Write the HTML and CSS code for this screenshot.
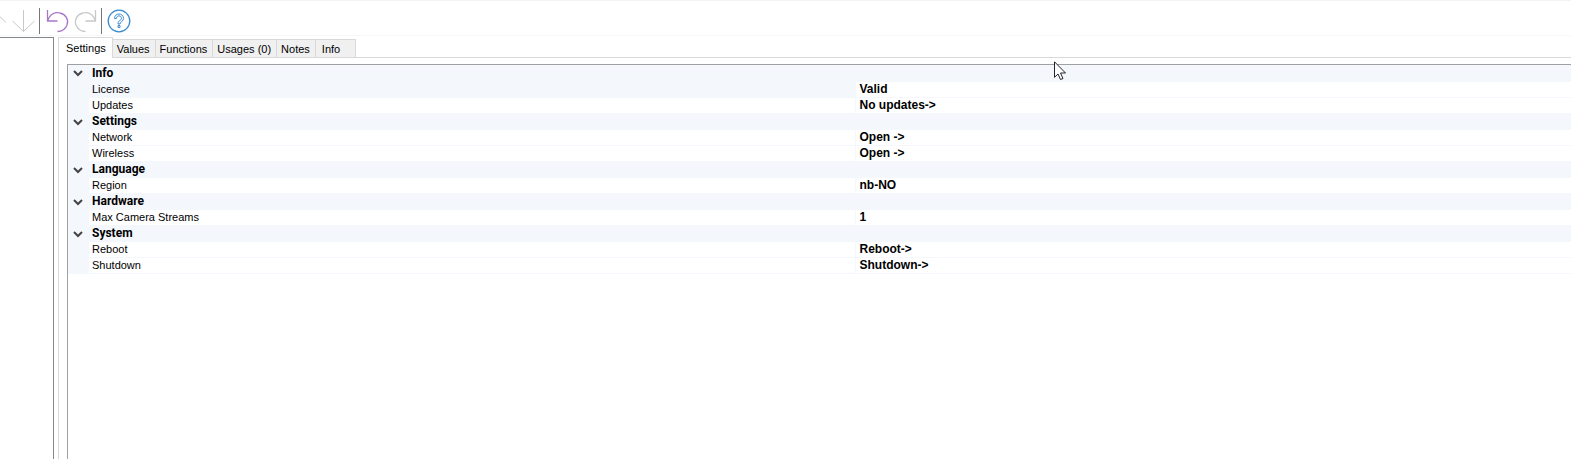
FILE: index.html
```
<!DOCTYPE html>
<html lang="en">
<head>
    <meta charset="UTF-8">
    <meta name="viewport" content="width=device-width, initial-scale=1.0">
    <title>Settings</title>
    <link rel="stylesheet" href="styles.css">
</head>
<body>
    <!-- Toolbar -->
    <div class="toolbar">
        <button type="button" class="tool tool-up" aria-label="Move up">
            <svg width="12" height="24" viewBox="0 0 12 24" fill="none" stroke="#c8c8c8"><path d="M-5 3v20M-16 13.500L-5 3L6 13.500"/></svg>
        </button>
        <button type="button" class="tool tool-down" aria-label="Move down">
            <svg width="24" height="24" viewBox="0 0 24 24" fill="none" stroke="#c8c8c8"><path d="M11.500 1v21M.5 12l11 10.500 11-10.500"/></svg>
        </button>
        <span class="separator"></span>
        <button type="button" class="tool" aria-label="Undo">
            <svg width="24" height="24" viewBox="0 0 24 24" fill="none" stroke="#a678c8" stroke-width="1.300"><path d="M1.500 1v11h10M1.500 12C4 5 9 2.500 14 4c6 1.500 9 7 7 12-1.500 4-5 6.500-9.500 6.500"/></svg>
        </button>
        <button type="button" class="tool tool-redo" aria-label="Redo">
            <svg width="24" height="24" viewBox="0 0 24 24" fill="none" stroke="#c8c8c8" stroke-width="1.300"><path d="M21.500 1v11h-10M21.500 12C19 5 14 2.500 9 4c-6 1.500-9 7-7 12 1.500 4 5 6.500 9.500 6.500"/></svg>
        </button>
        <span class="separator"></span>
        <button type="button" class="tool tool-help" aria-label="Help">
            <svg width="24" height="24" viewBox="0 0 24 24" fill="none" stroke="#3c8ccf" stroke-width="1.300"><circle cx="12" cy="12" r="10.800"/><path d="M7.500 9.500c0-6 9-6 9 0 0 3-3.500 3-3.500 5.500h-2c0-4 3.500-3.500 3.500-5.500 0-3.500-5-3.500-5 0z" stroke-width="1"/><path d="M11 16.500h2v2h-2z" stroke-width="1"/></svg>
        </button>
    </div>

    <div class="workspace">
        <div class="side-panel"></div>

        <div class="main-panel">
            <div class="tabs" role="tablist">
                <button type="button" class="tab active" role="tab" aria-selected="true">Settings</button>
                <button type="button" class="tab" role="tab">Values</button>
                <button type="button" class="tab" role="tab">Functions</button>
                <button type="button" class="tab" role="tab">Usages (0)</button>
                <button type="button" class="tab" role="tab">Notes</button>
                <button type="button" class="tab tab-last" role="tab">Info</button>
            </div>

            <div class="tab-content">
                <table class="property-grid">
                    <colgroup>
                        <col class="col-gutter">
                        <col class="col-name">
                        <col class="col-value">
                    </colgroup>
                    <tbody>
                        <tr class="category">
                            <td><button type="button" class="toggle" aria-label="Collapse Info"><svg width="10" height="8" viewBox="0 0 10 8"><path d="M1 2l4 4 4-4"/></svg></button></td>
                            <th colspan="2">Info</th>
                        </tr>
                        <tr class="selected"><td></td><td>License</td><td>Valid</td></tr>
                        <tr><td></td><td>Updates</td><td>No updates-&gt;</td></tr>
                    </tbody>
                    <tbody>
                        <tr class="category">
                            <td><button type="button" class="toggle" aria-label="Collapse Settings"><svg width="10" height="8" viewBox="0 0 10 8"><path d="M1 2l4 4 4-4"/></svg></button></td>
                            <th colspan="2">Settings</th>
                        </tr>
                        <tr><td></td><td>Network</td><td>Open -&gt;</td></tr>
                        <tr><td></td><td>Wireless</td><td>Open -&gt;</td></tr>
                    </tbody>
                    <tbody>
                        <tr class="category">
                            <td><button type="button" class="toggle" aria-label="Collapse Language"><svg width="10" height="8" viewBox="0 0 10 8"><path d="M1 2l4 4 4-4"/></svg></button></td>
                            <th colspan="2">Language</th>
                        </tr>
                        <tr><td></td><td>Region</td><td>nb-NO</td></tr>
                    </tbody>
                    <tbody>
                        <tr class="category">
                            <td><button type="button" class="toggle" aria-label="Collapse Hardware"><svg width="10" height="8" viewBox="0 0 10 8"><path d="M1 2l4 4 4-4"/></svg></button></td>
                            <th colspan="2">Hardware</th>
                        </tr>
                        <tr><td></td><td>Max Camera Streams</td><td>1</td></tr>
                    </tbody>
                    <tbody>
                        <tr class="category">
                            <td><button type="button" class="toggle" aria-label="Collapse System"><svg width="10" height="8" viewBox="0 0 10 8"><path d="M1 2l4 4 4-4"/></svg></button></td>
                            <th colspan="2">System</th>
                        </tr>
                        <tr><td></td><td>Reboot</td><td>Reboot-&gt;</td></tr>
                        <tr><td></td><td>Shutdown</td><td>Shutdown-&gt;</td></tr>
                    </tbody>
                </table>
            </div>
        </div>
    </div>

    <!-- Mouse pointer -->
    <svg class="pointer" width="12" height="20" viewBox="0 0 12 20" fill="#fff" stroke="#222233"><path d="M.5 .8v15.500l3.500-3.300 2.500 5.500 2.500-1-2.500-5.500h5z"/></svg>
</body>
</html>
```

FILE: styles.css
```
* {
    box-sizing: border-box;
}

body {
    margin: 0;
    min-height: 100vh;
    display: flex;
    flex-direction: column;
    overflow: hidden;
    background-color: #fff;
    color: #000;
    font-family: "Liberation Sans", Arial, sans-serif;
    font-size: 11px;
    line-height: 15px;
}

button {
    padding: 0;
    border: none;
    background: none;
    color: inherit;
    font: inherit;
}

svg {
    display: block;
}

.toolbar {
    display: flex;
    align-items: center;
    height: 36px;
    padding-top: 6px;
    border-top: 1px solid #f3f3f3;
    border-bottom: 1px solid #f7f7f7;
}

.tool-down {
    margin-right: 3px;
}

.tool-redo {
    margin: 0 3px 0 4px;
}

.tool-help {
    margin-left: 5px;
}

.separator {
    width: 1px;
    height: 26px;
    margin-right: 6px;
    background-color: #777;
}

.tool-redo + .separator {
    margin-right: 0;
}

.workspace {
    flex: 1;
    display: flex;
    padding-top: 1px;
}

.side-panel {
    width: 54px;
    border-top: 1px solid #828790;
    border-right: 1px solid #828790;
}

.main-panel {
    flex: 1;
    display: flex;
    flex-direction: column;
    margin-left: 4px;
}

.tabs {
    display: flex;
    align-items: flex-end;
    height: 21px;
    border-bottom: 1px solid #d9d9d9;
}

.tab {
    height: 18px;
    padding: 2px 5px 0 4px;
    border: 1px solid #d9d9d9;
    border-bottom: none;
    border-left: none;
    background-color: #f0f0f0;
}

.tab.active {
    height: 21px;
    padding: 0 6px 0 7px;
    margin-bottom: -1px;
    border-left: 1px solid #d9d9d9;
    background-color: #fff;
}

.tab-last {
    padding: 2px 15px 0 6px;
}

.tab-content {
    flex: 1;
    display: flex;
    flex-direction: column;
    padding: 6px 0 0 8px;
    border-left: 1px solid #d9d9d9;
}

.tab-content::after {
    content: "";
    flex: 1;
    border-left: 1px solid #a0a0a0;
}

.property-grid {
    width: 100%;
    table-layout: fixed;
    border-collapse: separate;
    border-spacing: 0;
    border-top: 1px solid #a0a0a0;
    border-left: 1px solid #a0a0a0;
}

.col-gutter {
    width: 21px;
}

.col-name {
    width: 51%;
}

.property-grid td,
.property-grid th {
    height: 16px;
    padding: 0 3px;
    border-bottom: 1px solid #f4f7fc;
    text-align: left;
    white-space: nowrap;
}

.property-grid tbody:first-of-type .category th {
    height: 17px;
}

.property-grid td:nth-child(2) {
    border-right: 1px solid #f4f7fc;
}

.property-grid td:first-child,
.category th,
.property-grid .selected td:nth-child(2) {
    background-color: #f4f7fc;
}

.property-grid td:last-child {
    padding-left: 4px;
    font-size: 12px;
    font-weight: bold;
}

.property-grid .category th {
    font-family: Roboto, "Liberation Sans", Arial, sans-serif;
    font-size: 12px;
    font-weight: bold;
}

.toggle {
    display: block;
    margin-left: 2px;
}

.toggle path {
    fill: none;
    stroke: #444;
    stroke-width: 2;
}

.pointer {
    position: absolute;
    top: 61px;
    left: 1054px;
}
```
